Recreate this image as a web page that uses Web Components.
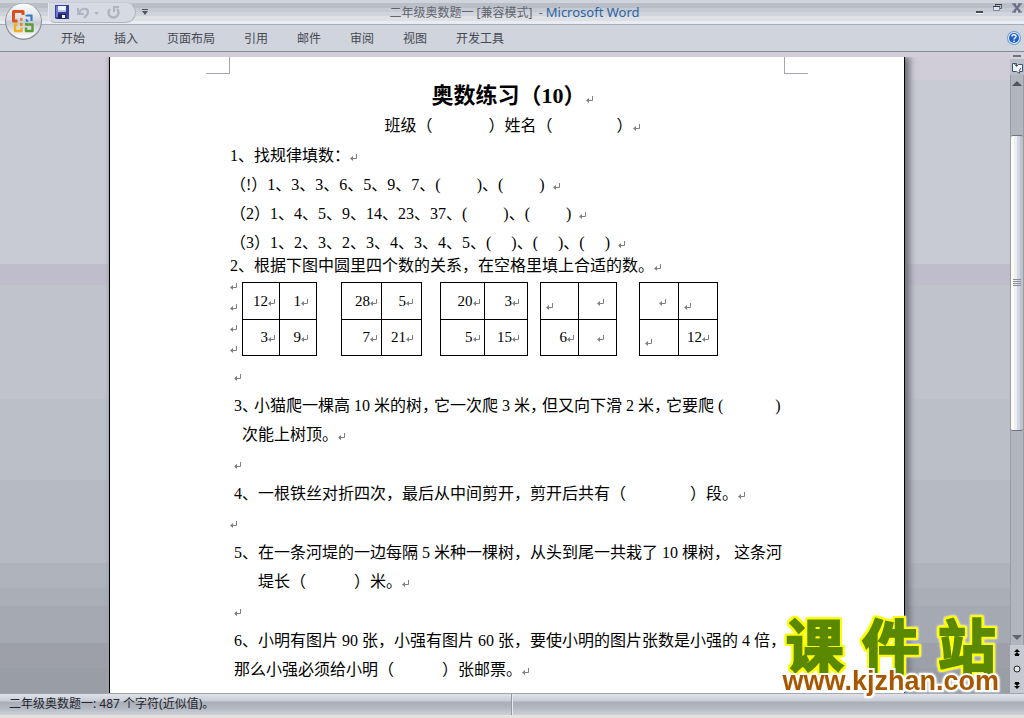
<!DOCTYPE html>
<html lang="zh-CN">
<head>
<meta charset="utf-8">
<title>二年级奥数题一 - Microsoft Word</title>
<style>
body{margin:0;font-family:"Noto Sans","Noto Sans CJK SC",sans-serif;font-size:12px}
</style>
</head>
<body>
<word-app>
  <title-bar slot="title">二年级奥数题一 [兼容模式]</title-bar>
  <ribbon-tabs slot="tabs" items="开始,插入,页面布局,引用,邮件,审阅,视图,开发工具"></ribbon-tabs>
  <doc-page slot="page">
    <doc-line kind="title">奥数练习（10）</doc-line>
    <doc-line kind="name">班级（　　　  ）姓名（　　　　）</doc-line>
    <doc-line>1、找规律填数：</doc-line>
    <doc-line>（!）1、3、3、6、5、9、7、(　　 )、(　　 )  </doc-line>
    <doc-line>（2）1、4、5、9、14、23、37、(　　 )、(　　 )  </doc-line>
    <doc-line>（3）1、2、3、2、3、4、3、4、5、(　 )、(　 )、(　 )  </doc-line>
    <doc-line kind="tight">2、根据下图中圆里四个数的关系，在空格里填上合适的数。</doc-line>
    <grid-row></grid-row>
    <doc-line kind="blank" indent="1"></doc-line>
    <doc-line kind="half" indent="1" nomark>3、 小猫爬一棵高 10 米的树， 它一次爬 3 米， 但又向下滑 2 米， 它要爬 (　　　 )</doc-line>
    <doc-line indent="3">次能上树顶。</doc-line>
    <doc-line kind="blank" indent="1"></doc-line>
    <doc-line indent="1">4、一根铁丝对折四次，最后从中间剪开，剪开后共有（　　　　）段。</doc-line>
    <doc-line kind="blank"></doc-line>
    <doc-line indent="1" nomark>5、在一条河堤的一边每隔 5 米种一棵树，从头到尾一共栽了 10 棵树， 这条河</doc-line>
    <doc-line indent="7">堤长（　　　）米。</doc-line>
    <doc-line kind="blank" indent="1"></doc-line>
    <doc-line indent="1" nomark>6、小明有图片 90 张，小强有图片 60 张，要使小明的图片张数是小强的 4 倍，</doc-line>
    <doc-line indent="1">那么小强必须给小明（　　　）张邮票。</doc-line>
  </doc-page>
  <scroll-rail slot="rail"></scroll-rail>
  <status-bar slot="status">二年级奥数题一: 487 个字符(近似值)。</status-bar>
  <site-mark slot="mark"></site-mark>
</word-app>

<script>
const define = (name, html) => customElements.define(name, class extends HTMLElement {
  connectedCallback() {
    if (this.shadowRoot) return;
    const t = document.createElement('template');
    t.innerHTML = typeof html === 'function' ? html(this) : html;
    this.attachShadow({ mode: 'open' }).append(t.content.cloneNode(true));
  }
});

define('word-app', `
<style>
:host{display:flex;flex-direction:column;height:100vh;position:relative;overflow:hidden;background:#d0d4dc}
.work{flex:1;min-height:0;display:flex}
.desk{flex:1;min-width:0;display:flex;justify-content:center;padding-left:4px;overflow:hidden;border-top:5px solid #d1ceda;
background:linear-gradient(#d0ccd8 0 23px,#c8cbd4 23px 207px,#bfbdcc 207px 228px,#c1c3cc 228px 342px,#bbc0c8 342px 423px,#b6bac2 423px 506px,#afb3bb 506px 531px,#aaaeb6 531px 549px,#a5a9b1 549px 586px,#9da0a8 586px 611px,#999da4 611px)}
.mark{position:absolute;right:25px;bottom:23px}
</style>
<slot name="title"></slot>
<slot name="tabs"></slot>
<div class="work"><main class="desk"><slot name="page"></slot></main><slot name="rail"></slot></div>
<slot name="status"></slot>
<div class="mark"><slot name="mark"></slot></div>`);

define('title-bar', `
<style>
:host{display:flex;align-items:center;height:24px;border-bottom:1px solid #a8acb6;position:relative;font-size:12px;color:#60646e;
background:linear-gradient(#d0d4dc 0 3px,#babec6 3px 8px,#c6cad2 8px 12px,#d0d4dc 12px 16px,#dee0e4 16px 21px,#e8ecf4 21px)}
button{border:0;background:none;padding:0;margin:0;display:block;line-height:0}
.office{position:absolute;left:4px;top:2px;z-index:2}
.qat{display:flex;align-items:center;box-sizing:border-box;width:88px;height:21px;margin-left:48px;padding-left:6px;gap:8px;background:#d6dae2;border:1px solid #b0b4be;border-top-color:#c8ccd4;border-left-color:#e4e7ee;border-radius:0 11px 11px 8px}
.more{margin-left:6px}
h1{flex:1;margin:0;font-size:12px;font-weight:400;line-height:22px;text-align:center;white-space:pre;padding-right:19px}
b{font-weight:400;font-size:13px;color:#2c64a4}
.win{display:flex;gap:9px;width:124px;justify-content:flex-end;padding-bottom:8px}
</style>
<button class="office" aria-label="Office">
<svg width="39" height="39" viewBox="0 0 39 39"><defs><linearGradient id="g" x1="0" y1="0" x2="0" y2="1"><stop offset="0" stop-color="#fdfdfe"/><stop offset=".45" stop-color="#d9dce3"/><stop offset=".55" stop-color="#c6cad3"/><stop offset="1" stop-color="#fff"/></linearGradient></defs>
<circle cx="19.5" cy="19.5" r="18.5" fill="#8d9098"/><circle cx="19.5" cy="19" r="17.500" fill="url(#g)"/>
<g fill="none" stroke-width="3" stroke-linejoin="round"><path d="M13.500 19H9.500V9.500H19V13" stroke="#d8501c"/><path d="M22.500 13V13.500H27.500V19" stroke="#2f7cc4" stroke-width="2.200"/><path d="M22.500 17v2h2" stroke="#2f7cc4" stroke-width="1.600"/><path d="M13.500 22.500H11V29H17.500V25.500" stroke="#f2b01e" stroke-width="2.400"/><path d="M22 22.500H28.500V29H22V25.500" stroke="#5c9c34" stroke-width="2.400"/></g>
<path d="M16 16h2.500v3H16zM16 21h2.500v3H16z" fill="#e8862a"/><path d="M21 21h2.500v2.500H21z" fill="#5c9c34"/></svg></button>
<div class="qat">
<button aria-label="保存"><svg width="14" height="14" viewBox="0 0 14 14"><path d="M0 0h14v14H1L0 13z" fill="#3a3f9c"/><path d="M1 1h2v11H1z" fill="#6d78d8"/><path d="M3 1h8v6H3z" fill="#eef2ff"/><path d="M3 5h8v2H3z" fill="#b9c6f2"/><path d="M3 9h8v5H3z" fill="#20245c"/><path d="M7 10h3v3H7z" fill="#fff"/></svg></button>
<button aria-label="撤消"><svg width="22" height="13" viewBox="0 0 22 13"><path d="M1 2v6h6" fill="none" stroke="#b0b4c2" stroke-width="2"/><path d="M2 7C5 1 11 2 11 6c0 3-2 4-4 6" fill="none" stroke="#b0b4c2" stroke-width="2.200"/><path d="M17 6h5l-2.500 3z" fill="#b0b4c2"/></svg></button>
<button aria-label="重复"><svg width="13" height="13" viewBox="0 0 13 13"><path d="M3 3a5 5 0 1 0 7 0" fill="none" stroke="#b0b4c2" stroke-width="2.400"/><path d="M7 0v6M7 1h5" stroke="#b0b4c2" stroke-width="2" fill="none"/></svg></button>
</div>
<button class="more" aria-label="自定义快速访问工具栏"><svg width="6" height="6" viewBox="0 0 6 6"><path d="M0 0h6v1H0zM0 2h6L3 6z" fill="#50545e"/></svg></button>
<h1><slot></slot>  - <b>Microsoft Word</b></h1>
<div class="win">
<button aria-label="最小化"><svg width="8" height="11"><path d="M0 8h7v2H0z" fill="#444854"/><path d="M0 10h7v1H0z" fill="#fff"/></svg></button>
<button aria-label="还原"><svg width="10" height="11"><path d="M2.500 3V1.500h6v4H7" fill="none" stroke="#5a6070"/><path d="M.5 3.500h6v4h-6z" fill="#e0e4ec" stroke="#7886a0"/><path d="M2 1h7v1H2zM0 3h7v1H0z" fill="#383c46"/></svg></button>
<button aria-label="关闭"><svg width="12" height="11" viewBox="0 0 12 11"><path d="M2 1.500l6 7M8 1.500l-6 7" stroke="#667086" stroke-width="2.200"/><path d="M0 1h4M6 1h4M0 9h4M6 9h4" stroke="#50586a"/></svg></button>
</div>`);

define('ribbon-tabs', el => `
<style>
:host{display:flex;align-items:center;height:26px;background:#d0d4dc;border-bottom:1px solid #868a92;padding-left:61px;padding-right:3px}
nav{flex:1;display:flex;gap:29px}
button{border:0;background:none;padding:0;font:12px/20px "Noto Sans CJK SC",sans-serif;color:#444852;white-space:nowrap}
.help{line-height:0}
</style>
<nav>${el.getAttribute('items').split(',').map(t => `<button>${t}</button>`).join('')}</nav>
<button class="help" aria-label="帮助"><svg width="14" height="14" viewBox="0 0 14 14"><circle cx="7" cy="7" r="7" fill="#6f9bd4"/><circle cx="7" cy="7" r="6" fill="#e6f0fc"/><circle cx="7" cy="7" r="5" fill="#1f5fd0"/><path d="M5 5.500C5 3 9 3 9 5.500C9 7 7 7 7 8.500M7 9.500v1.500" fill="none" stroke="#fff" stroke-width="1.500"/></svg></button>`);

define('return-mark', `
<style>:host{display:inline-block;line-height:0}</style>
<svg width="7" height="7" viewBox="0 0 7 7"><path d="M6.500 0v4.500H1" fill="none" stroke="#808080"/><path d="M3 2v5L0 4.500z" fill="#808080"/></svg>`);

define('doc-page', `
<style>
:host{display:block;box-sizing:border-box;flex:0 1 796px;min-width:0;background:#fff;border:solid #000;border-width:0 1px;box-shadow:5px 0 6px #70747c,-1px 0 3px #a0a4b0;color:#000}
.crop{display:flex;justify-content:space-between;padding:0 96px;margin-bottom:7px}
.crop i{width:23px;height:16px;border:solid #a4a6b0;border-width:0 1px 1px 0}
.crop i+i{border-width:0 0 1px 1px}
.text{padding:0 110px 0 120px}
</style>
<div class="crop"><i></i><i></i></div>
<div class="text"><slot></slot></div>`);

define('doc-line', el => `
<style>
:host{display:block;font:16px/29px "Liberation Serif","Noto Sans CJK SC",serif;height:29px;white-space:nowrap}
span{white-space:pre}
:host([kind=title]){font-size:22px;font-weight:700;line-height:30px;height:30px;text-align:center}
:host([kind=name]){line-height:30px;height:30px;text-align:center}
:host([kind=tight]){line-height:18px;height:18px}
:host([kind=blank]){height:30px;line-height:30px}
:host([kind=half]) span{font-feature-settings:"halt"}
:host([indent="1"]){padding-left:4px}
:host([indent="3"]){padding-left:12px}
:host([indent="7"]){padding-left:28px}
</style><span><slot></slot></span>${el.hasAttribute('nomark') ? '' : '<return-mark></return-mark>'}`);

define('grid-row', `
<style>
:host{display:flex;align-items:flex-start;height:74px;margin:7px 0 5px}
.marks{display:grid;grid-auto-rows:21px;width:12px;padding-top:1px}
.b{margin-left:24px}.c{margin-left:18px}.d{margin-left:12px}.e{margin-left:22px}
</style>
<div class="marks"><return-mark></return-mark><return-mark></return-mark><return-mark></return-mark><return-mark></return-mark></div>
<number-grid w="75" cells="12,1,3,9"></number-grid>
<number-grid class="b" w="81" cells="28,5,7,21"></number-grid>
<number-grid class="c" w="88" cells="20,3,5,15"></number-grid>
<number-grid class="d" w="77" cells="<,,6,"></number-grid>
<number-grid class="e" w="79" cells=",<,<,12"></number-grid>`);

define('number-grid', el => {
  const c = el.getAttribute('cells').split(',');
  const td = v => v === '<' ? '<td class="l"><return-mark></return-mark></td>'
    : `<td${v ? '' : ' class="n"'}>${v}<return-mark></return-mark></td>`;
  return `
<style>
:host{display:block;width:${el.getAttribute('w')}px}
table{width:100%;height:74px;border-collapse:collapse;table-layout:fixed;font:15px/20px "Liberation Serif",serif}
td{border:1px solid #000;padding:0 8px 0 0;text-align:right;white-space:nowrap;width:50%;height:36px;box-sizing:border-box}
td:first-child{padding-right:4px}
td.n,td.n:first-child{padding-right:12px}
td.l,td.l:first-child{text-align:left;padding:8px 0 0 5px}
</style>
<table><tr>${td(c[0])}${td(c[1])}</tr><tr>${td(c[2])}${td(c[3])}</tr></table>`;
});

define('scroll-rail', `
<style>
:host{display:flex;flex-direction:column;width:14px;background:#c6c9d1;line-height:0}
button{border:0;background:none;padding:0;display:grid;place-items:center;line-height:0;width:14px}
.split{height:7px;display:grid;place-items:center;background:#d1d4dc}
.split i{width:8px;height:2px;background:#70747c}
.ruler{height:16px;background:#b9bdc5}
.track{flex:1;display:flex;flex-direction:column;border:solid #989ca4;border-width:0 1px;background:#b1b5bd}
.arrow{height:16px;width:12px}
.before{flex:44}
.thumb{flex:294;display:grid;place-items:center;border:1px solid #70747c;border-width:1px 0;border-radius:2px;background:linear-gradient(90deg,#fffbee 0 3px,#eceff8 3px 6px,#d3d7e0 6px 9px,#bfc3cc 9px)}
.after{flex:198}
.nav{height:48px;display:grid}
</style>
<div class="split"><i></i></div>
<button class="ruler" aria-label="标尺"><svg width="13" height="13" viewBox="0 0 13 13"><path d="M1.500 2.500h4v3l2-2h4v7h-3v2l-3-2h-4z" fill="#f2f4fa" stroke="#3e5474"/><path d="M3 2l2 3M8 10l2-3" stroke="#3e5474"/></svg></button>
<div class="track">
<button class="arrow" aria-label="向上"><svg width="10" height="5"><path d="M0 5L5 0l5 5z" fill="#50545c"/></svg></button>
<div class="before"></div>
<div class="thumb"><svg width="8" height="8"><path d="M0 .5h8M0 2.500h8M0 4.500h8M0 6.500h8" stroke="#888c96"/></svg></div>
<div class="after"></div>
<button class="arrow" aria-label="向下"><svg width="10" height="5"><path d="M0 0h10L5 5z" fill="#5c6472"/></svg></button>
</div>
<div class="nav">
<button aria-label="前一页"><svg width="6" height="7"><path d="M0 3l3-3 3 3zM0 6l3-3 3 3zM1 6h4v1H1z"/></svg></button>
<button aria-label="选择浏览对象"><svg width="8" height="8"><circle cx="4" cy="4" r="3" fill="#e4e6ea" stroke="#222"/></svg></button>
<button aria-label="下一页"><svg width="6" height="7"><path d="M0 1l3 3 3-3zM0 4l3 3 3-3zM1 0h4v1H1z"/></svg></button>
</div>`);

define('status-bar', `
<style>
:host{display:flex;align-items:stretch;height:21px;border-top:1px solid #a0a4ac;border-bottom:3px solid #e4e2dc;font:12px/20px "Noto Sans","Noto Sans CJK SC",sans-serif;color:#23262e;
background:linear-gradient(#e0e3ea 0,#c8ccd4 7px,#a9adb6 8px,#b4b8c0 14px,#ced1da 100%)}
span{box-sizing:border-box;width:50%;padding-left:9px;border-right:1px solid #94989f;white-space:nowrap}
i{flex:1;border-left:1px solid #e8eaf0}
</style><span><slot></slot></span><i></i>`);

define('site-mark', `
<style>
:host{display:block;text-align:center;filter:drop-shadow(0 0 1px #fff)}
.name{display:flex;gap:18px;justify-content:center;font:700 58px/48px "Noto Sans CJK SC",sans-serif;color:#5a8800;-webkit-text-stroke:2px #5a8800;
filter:drop-shadow(2px 0 0 #ff0) drop-shadow(-2px 0 0 #ff0) drop-shadow(0 2px 0 #ff0) drop-shadow(0 -2px 0 #ff0)}
a{display:block;position:relative;font:700 27px/28px "Liberation Sans",sans-serif;color:#a85600;text-decoration:none;-webkit-text-stroke:4px #fff;paint-order:stroke fill}
</style>
<div class="name"><span>课</span><span>件</span><span>站</span></div>
<a href="#">www.kjzhan.com</a>`);
</script>
</body>
</html>
